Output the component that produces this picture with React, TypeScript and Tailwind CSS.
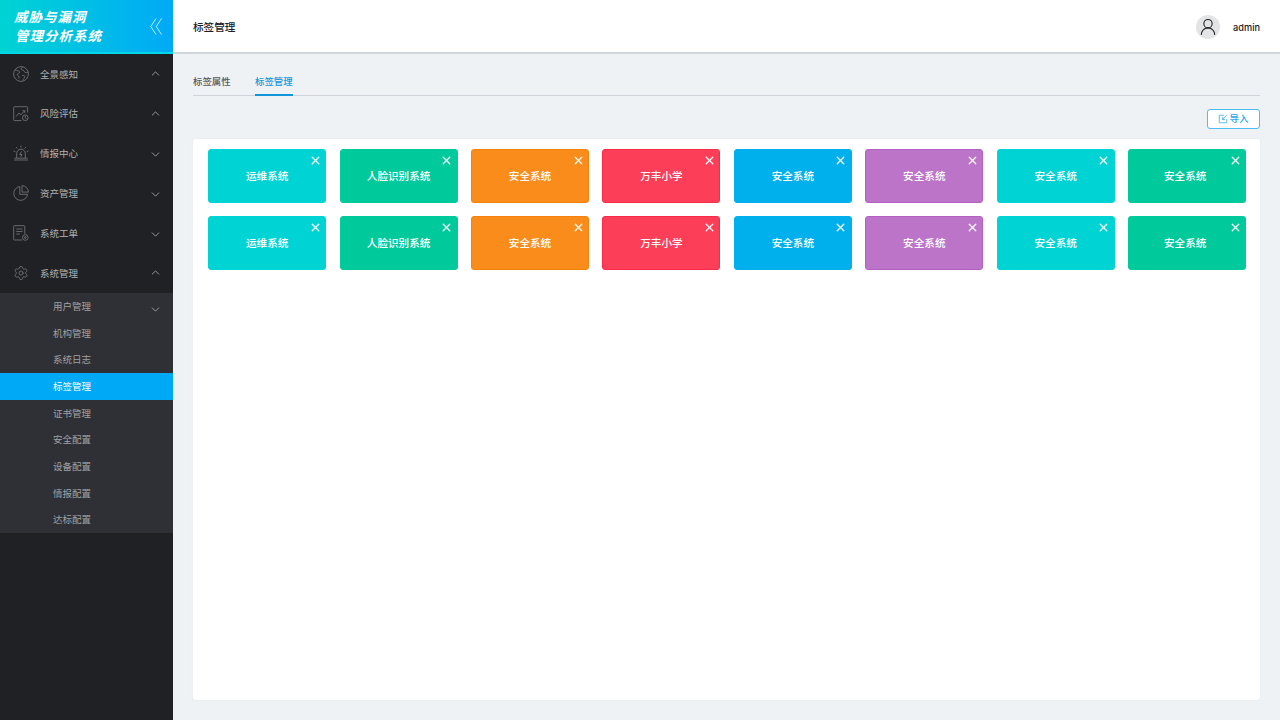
import { ChevronDown, ChevronUp, Settings, UserRound, X } from 'lucide-react';
import type { ReactNode } from 'react';

const CJK = "font-['Inter','Noto_Sans_CJK_SC',sans-serif]";

const IconGlobe = () => (
  <svg viewBox="0 0 16 16" className="w-4 h-4" fill="none" stroke="currentColor" strokeWidth="0.7">
    <circle cx="8" cy="8" r="7.4" />
    <path d="M2 3.8c1.6.2 2.6 1 3.6 1.2.9.2 1.3 1 .8 1.8-.5.7-1.8.6-2.2 1.5-.3.8.7 1.2 1.4 1.7.6.5.5 1.500.3 2.500" />
    <path d="M9.500.8c-.5 1 -1.600 1.500-1.300 2.500.3.900 1.700.7 2.500 1.200.9.500.5 1.600 1.300 2 .8.400 1.800-.2 3.200-.4" />
    <path d="M9.200 9.600c1-.4 2.200-.2 2.500.6.300.900-.3 1.700-.9 2.400-.5.600-.7 1.300-1 2" />
  </svg>
);

const IconRisk = () => (
  <svg viewBox="0 0 16 16" className="w-4 h-4" fill="none" stroke="currentColor" strokeWidth="0.7">
    <path d="M14.600 6.500V1.500a.8.8 0 0 0-.8-.8H1.500a.8.8 0 0 0-.8.8v12.300a.8.8 0 0 0 .8.800h7" />
    <path d="M3 10.500l3-3.500 2 1.800 3.500-4" />
    <path d="M9.500 4.700h2.200v2.200" />
    <circle cx="12.300" cy="11.800" r="2.800" />
    <path d="M12.300 10.200v1.700l1.200.7" />
  </svg>
);

const IconAlarm = () => (
  <svg viewBox="0 0 16 16" className="w-4 h-4" fill="none" stroke="currentColor" strokeWidth="0.7">
    <path d="M3.700 13V8.500a4.300 4.300 0 0 1 8.600 0V13" />
    <path d="M1.500 13.200h13M1 15h14" />
    <path d="M8.500 6.500 6.700 9.500h2.400L7.500 12" />
    <path d="M8 .5v2M3 2l1.300 1.500M13 2l-1.300 1.500M.6 6l1.800.7M15.400 6l-1.800.7" />
  </svg>
);

const IconPie = () => (
  <svg viewBox="0 0 16 16" className="w-4 h-4" fill="none" stroke="currentColor" strokeWidth="0.7">
    <path d="M6.800 1.600a6.900 6.900 0 1 0 7.700 7.700H6.800z" />
    <path d="M9 .6a6.500 6.500 0 0 1 6.400 6.500H9z" />
  </svg>
);

const IconOrder = () => (
  <svg viewBox="0 0 16 16" className="w-4 h-4" fill="none" stroke="currentColor" strokeWidth="0.7">
    <path d="M9 15H1.500a.8.8 0 0 1-.8-.8V1.500a.8.8 0 0 1 .8-.8h9.500a.8.8 0 0 1 .8.8v7.500" />
    <path d="M3.300 4h6.300M3.300 6.500h6.300M3.300 9h3.500" />
    <circle cx="12.300" cy="12.500" r="2.800" />
    <circle cx="12.300" cy="12.500" r="0.900" />
  </svg>
);

type MenuRow = { label: string; icon: ReactNode; open: boolean };

const MENU: MenuRow[] = [
  { label: '全景感知', icon: <IconGlobe />, open: true },
  { label: '风险评估', icon: <IconRisk />, open: true },
  { label: '情报中心', icon: <IconAlarm />, open: false },
  { label: '资产管理', icon: <IconPie />, open: false },
  { label: '系统工单', icon: <IconOrder />, open: false },
  { label: '系统管理', icon: <Settings className="w-4 h-4" strokeWidth={1} />, open: true },
];

const SUBMENU = ['用户管理', '机构管理', '系统日志', '标签管理', '证书管理', '安全配置', '设备配置', '情报配置', '达标配置'];

const TAGS = [
  { label: '运维系统', cls: 'bg-[#00d3d3] border-[#00d3d3]' },
  { label: '人脸识别系统', cls: 'bg-[#00c99b] border-[#00c99b]' },
  { label: '安全系统', cls: 'bg-[#f98c1b] border-[#f5820e]' },
  { label: '万丰小学', cls: 'bg-[#fd3e59] border-[#f92b48]' },
  { label: '安全系统', cls: 'bg-[#00b0ec] border-[#00b0ec]' },
  { label: '安全系统', cls: 'bg-[#bc74c8] border-[#b45fc2]' },
  { label: '安全系统', cls: 'bg-[#00d3d3] border-[#00d3d3]' },
  { label: '安全系统', cls: 'bg-[#00c99b] border-[#00c99b] pr-[4px]' },
];

function Sidebar() {
  return (
    <aside className="w-[173px] shrink-0 h-full bg-[#202124] flex flex-col">
      <div className="h-[54px] shrink-0 flex items-center justify-between pl-[14px] pr-[11px] bg-gradient-to-r from-[#00d3d3] to-[#00a9f6] border-b-2 border-[#00d8e8]">
        <div className="text-white text-[13.500px] leading-[19px] font-bold italic tracking-[1px] pt-[1px]">
          <div>威胁与漏洞</div>
          <div className="pl-[1px]">管理分析系统</div>
        </div>
        <svg viewBox="0 0 12 17" className="w-3 h-[17px] text-white/85" fill="none" stroke="currentColor" strokeWidth="0.9">
          <path d="M6 .5.8 8.500 6 16.500" />
          <path d="M11.500.5 6.300 8.500l5.200 8" />
        </svg>
      </div>
      {MENU.map((m) => (
        <div key={m.label} className="h-[39.800px] shrink-0 flex items-center pl-[13px] pr-[11px] text-[#b0b1b3]">
          <span className="w-4 h-4 text-[#85868a]">{m.icon}</span>
          <span className="ml-[11px] flex-1 pt-[1px] text-[9.500px] leading-none">{m.label}</span>
          {m.open ? <ChevronUp className="w-[13px] h-[13px]" strokeWidth={1.500} /> : <ChevronDown className="w-[13px] h-[13px] mt-[2px]" strokeWidth={1.500} />}
        </div>
      ))}
      <div className="bg-[#2f3035] mt-[0.200px]">
        {SUBMENU.map((s, i) => (
          <div
            key={s}
            className={`h-[26.670px] flex items-center pl-[53px] pr-[11px] text-[9.500px] leading-none ${i === 3 ? 'bg-[#00a9f6] text-white' : 'text-[#a0a1a4]'}`}
          >
            <span className="flex-1 pt-[1px]">{s}</span>
            {i === 0 && <ChevronDown className="w-[13px] h-[13px] mt-[6px] text-[#b0b1b3]" strokeWidth={1.500} />}
          </div>
        ))}
      </div>
    </aside>
  );
}

function Tag({ label, cls }: { label: string; cls: string }) {
  return (
    <div className={`relative w-[118px] h-[54px] rounded-[3px] border flex items-center justify-center text-white text-[10.600px] font-medium ${cls}`}>
      <span className="pt-[2px]">{label}</span>
      <X className="absolute top-[3.500px] right-[3.500px] w-[13px] h-[13px]" strokeWidth={2.400} />
    </div>
  );
}

export default function App() {
  return (
    <div className={`w-[1280px] h-[720px] flex overflow-hidden bg-[#eff2f5] ${CJK}`}>
      <Sidebar />
      <div className="flex-1 min-w-0 flex flex-col">
        <header className="h-[54px] shrink-0 bg-white border-b-2 border-[#cfd6dc] flex items-center pl-5 pr-5">
          <h1 className="flex-1 pt-[4px] text-[10.600px] font-medium text-[#202124]">标签管理</h1>
          <div className="w-6 h-6 mt-[1px] rounded-full bg-[#e3e4e6] flex items-center justify-center text-[#202124]">
            <UserRound className="w-[20px] h-[20px]" strokeWidth={1.300} />
          </div>
          <span className="ml-[13px] pt-[3px] text-[9.200px] text-[#202124] font-medium">admin</span>
        </header>
        <main className="flex-1 min-h-0 flex flex-col pl-5 pr-5 pb-5">
          <div className="mt-[15px] h-[27px] shrink-0 flex border-b border-[#cfd4da] text-[9.400px] whitespace-nowrap">
            <div className="w-[62px] pt-[6px] text-[#55585c] font-medium">标签属性</div>
            <div className="w-[38px] pt-[6px] text-[#1296db] font-medium border-b-2 border-[#1296db] h-[27px]">标签管理</div>
          </div>
          <div className="mt-[13px] shrink-0 flex justify-end">
            <button className="w-[53px] h-5 rounded-[3px] border border-[#4dbdf4] bg-white flex items-center justify-center gap-[1px] text-[#2aa7ea] text-[9.500px] font-medium">
              <svg viewBox="0 0 12 12" className="w-[10px] h-[10px]" fill="none" stroke="currentColor" strokeWidth="0.900">
                <path d="M10.500 6v4.500h-9v-9H7" />
                <path d="M10.500 1.500 5.500 6.500M5.500 3.800v2.900h2.900" />
              </svg>
              <span className="pt-[1px]">导入</span>
            </button>
          </div>
          <section className="mt-[10px] flex-1 min-h-0 rounded-[3px] bg-white pt-[10px] pl-[15.200px] pr-[13.800px] shadow-[0_0_3px_rgba(0,0,0,0.04)]">
            <div className="flex flex-col gap-[13px]">
              {[0, 1].map((row) => (
                <div key={row} className="flex justify-between">
                  {TAGS.map((t, i) => (
                    <Tag key={i} label={t.label} cls={t.cls} />
                  ))}
                </div>
              ))}
            </div>
          </section>
        </main>
      </div>
    </div>
  );
}
